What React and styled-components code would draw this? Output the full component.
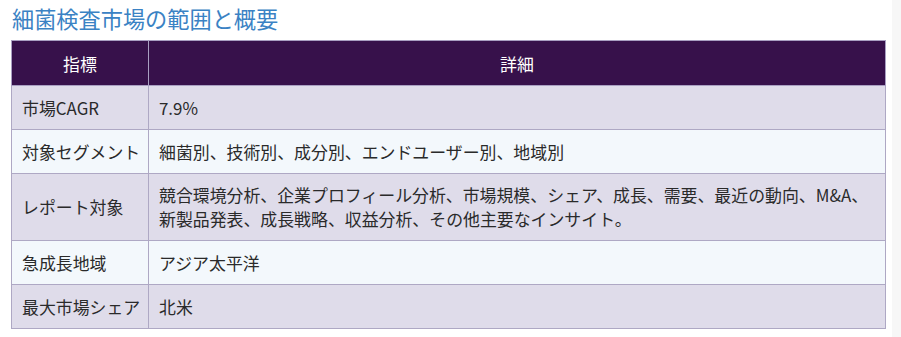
import React from "react";
import styled, { createGlobalStyle } from "styled-components";

const GlobalStyle = createGlobalStyle`
  html, body {
    margin: 0;
    padding: 0;
    background: #f7f7f7;
  }
  body {
    font-family: "Noto Sans CJK JP", "Noto Sans", sans-serif;
  }
`;

const Page = styled.div`
  width: 892px;
  height: 337px;
  background: #ffffff;
  padding: 3px 15px 0 11px;
  box-sizing: border-box;
`;

const Title = styled.h2`
  margin: 0 0 7px 1px;
  font-size: 22.2px;
  font-weight: 400;
  line-height: 30px;
  color: #3a82c4;
`;

const Table = styled.table`
  width: 875px;
  table-layout: fixed;
  border-collapse: collapse;
  font-size: 16.9px;
  color: #2a2a2a;
`;

const HeadCell = styled.th`
  height: 45px;
  padding: 0 10px;
  box-sizing: border-box;
  background: #37114b;
  color: #ffffff;
  font-weight: 400;
  text-align: center;
  border: 1px solid #a99fc2;
  width: ${(p) => p.$width || "auto"};
`;

const Row = styled.tr`
  background: ${(p) => (p.$alt ? "#f3f8fc" : "#dfdcea")};
`;

const Cell = styled.td`
  height: 44px;
  padding: 9px 6px 9px 10px;
  box-sizing: border-box;
  line-height: 24px;
  border: 1px solid #aea8c4;
  vertical-align: middle;
  white-space: nowrap;
`;

const rows = [
  ["市場CAGR", ["7.9%"]],
  ["対象セグメント", ["細菌別、技術別、成分別、エンドユーザー別、地域別"]],
  [
    "レポート対象",
    [
      "競合環境分析、企業プロフィール分析、市場規模、シェア、成長、需要、最近の動向、M&A、",
      "新製品発表、成長戦略、収益分析、その他主要なインサイト。",
    ],
  ],
  ["急成長地域", ["アジア太平洋"]],
  ["最大市場シェア", ["北米"]],
];

export default function App() {
  return (
    <>
      <GlobalStyle />
      <Page>
        <Title>細菌検査市場の範囲と概要</Title>
        <Table>
          <thead>
            <tr>
              <HeadCell $width="137px">指標</HeadCell>
              <HeadCell>詳細</HeadCell>
            </tr>
          </thead>
          <tbody>
            {rows.map(([k, lines], i) => (
              <Row key={k} $alt={i % 2 === 1}>
                <Cell>{k}</Cell>
                <Cell>
                  {lines.map((l, j) => (
                    <React.Fragment key={j}>
                      {j > 0 && <br />}
                      {l}
                    </React.Fragment>
                  ))}
                </Cell>
              </Row>
            ))}
          </tbody>
        </Table>
      </Page>
    </>
  );
}
